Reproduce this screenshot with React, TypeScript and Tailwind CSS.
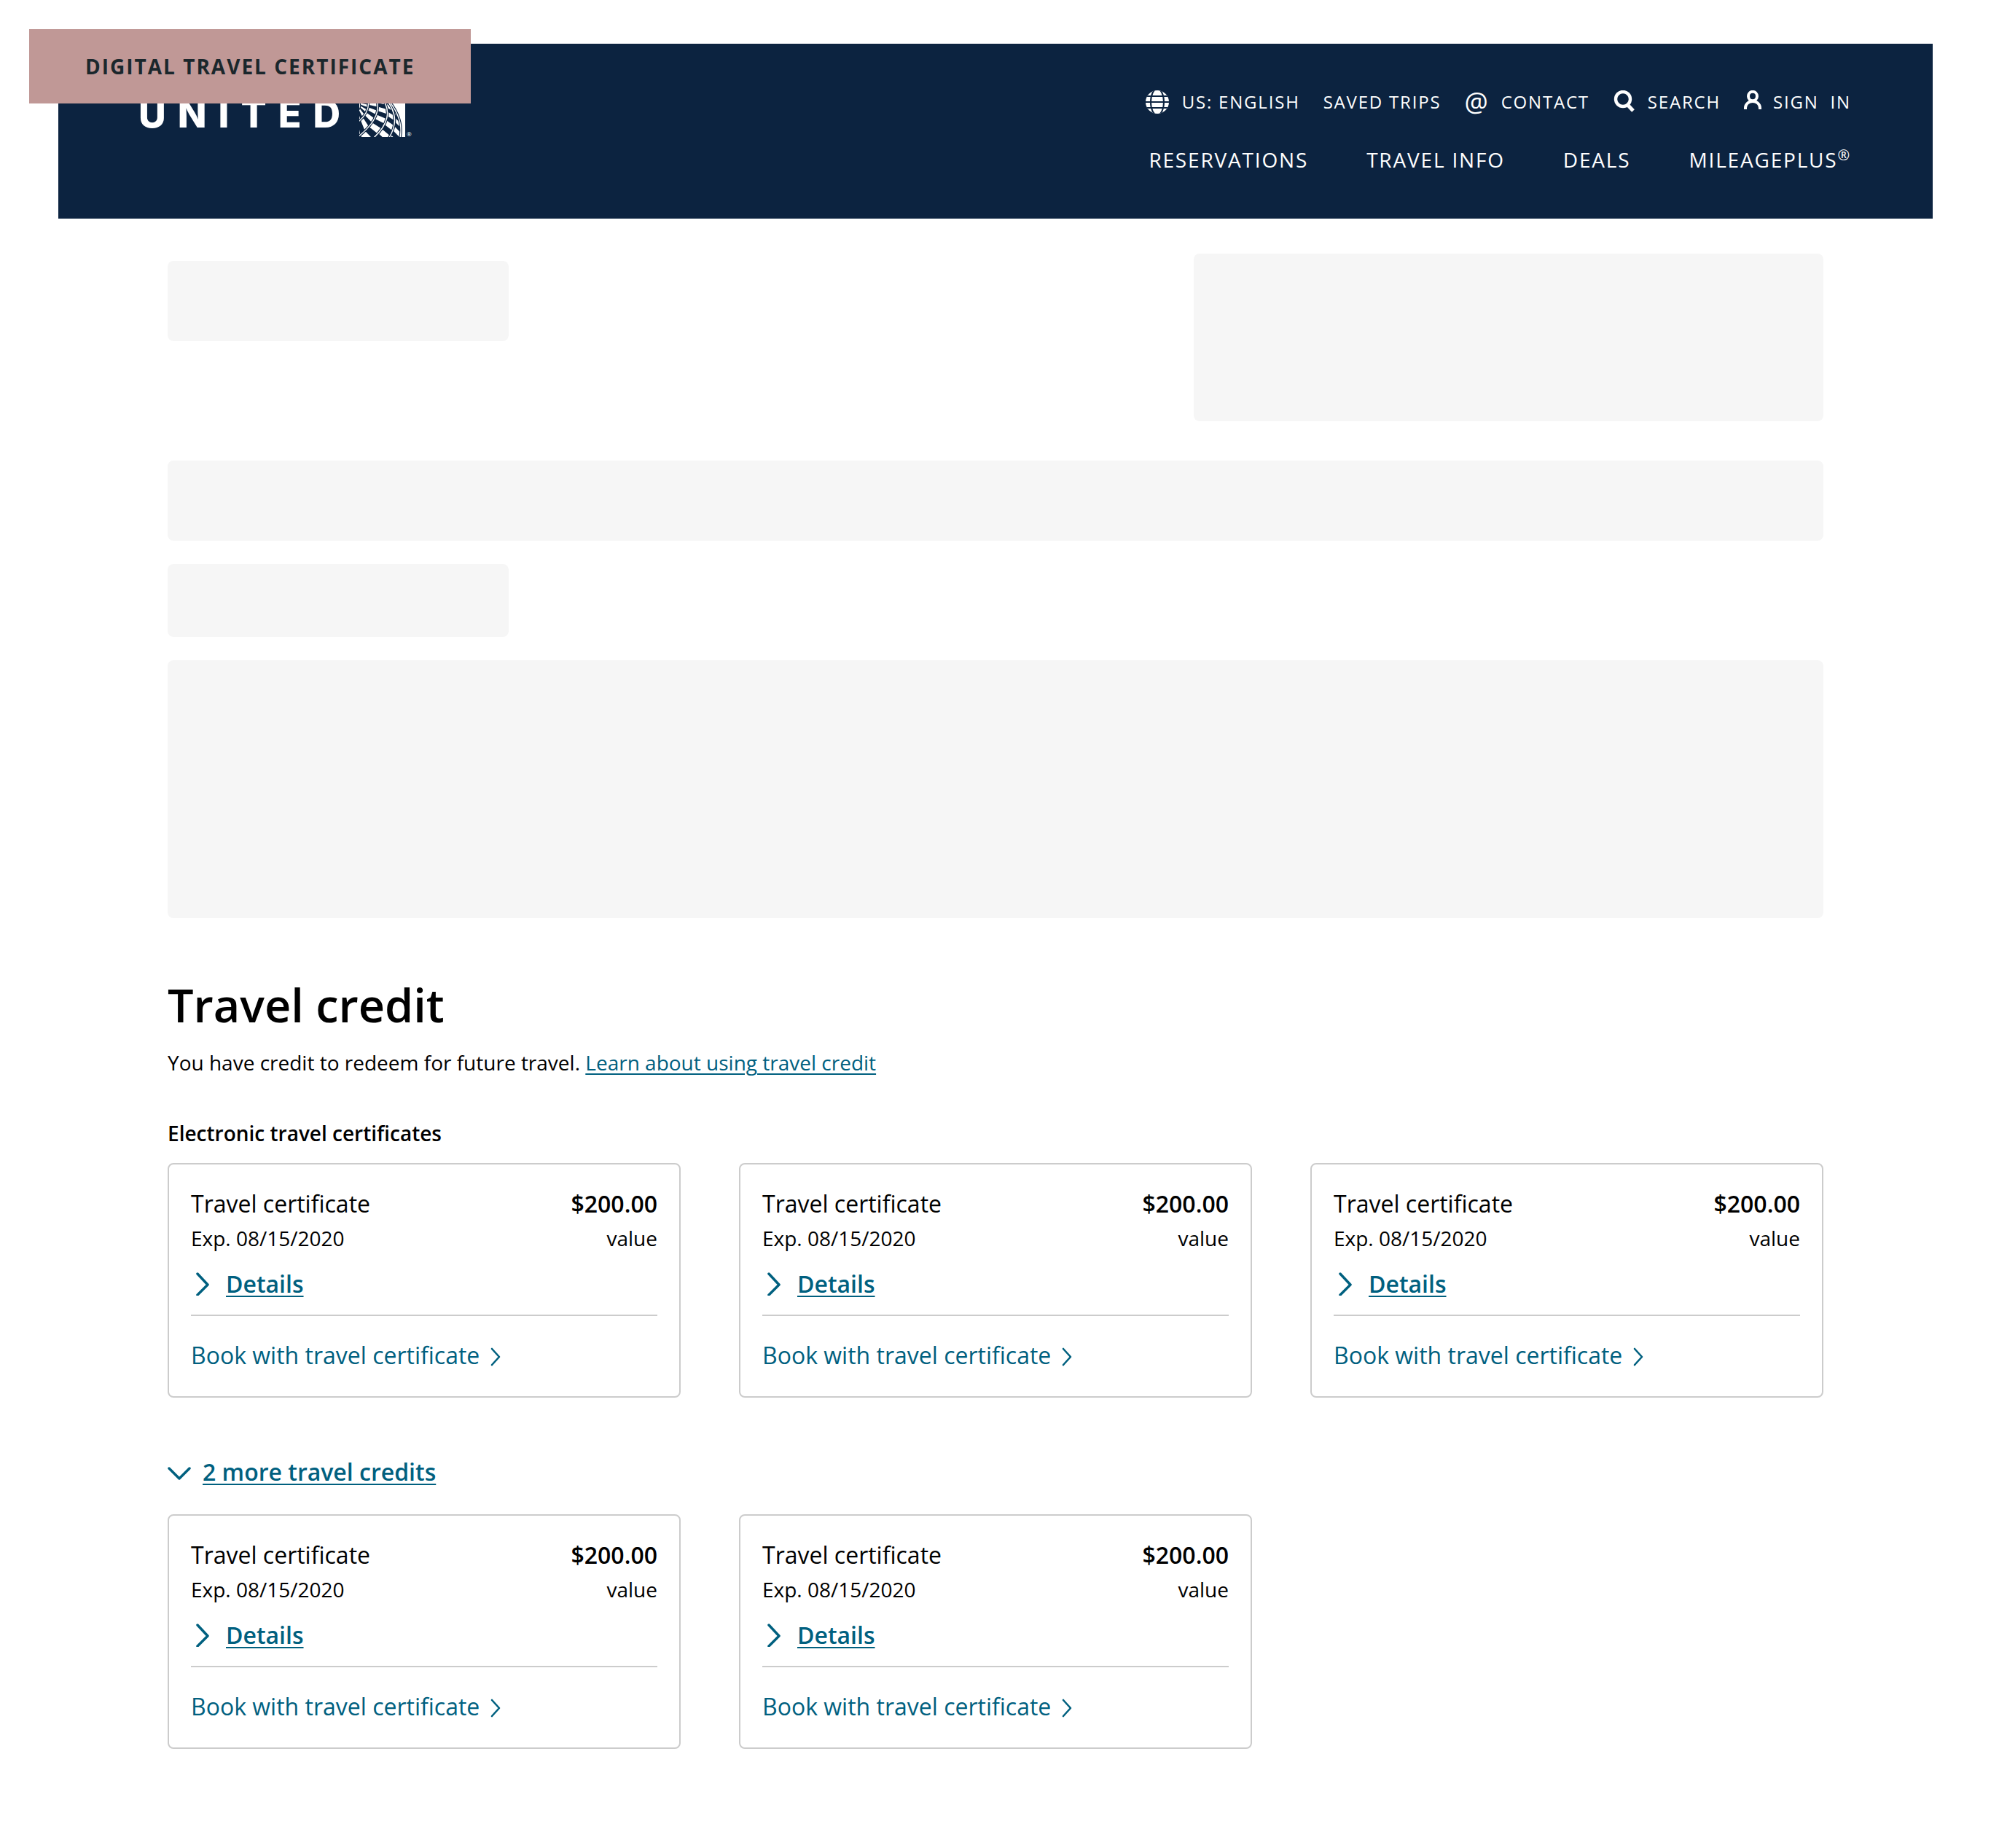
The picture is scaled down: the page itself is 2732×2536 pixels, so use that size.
import React from "react";

function GlobeIcon() {
  return (
    <svg viewBox="0 0 32 32" className="size-8" aria-hidden="true">
      <defs>
        <clipPath id="globe-disc">
          <circle cx="16" cy="16" r="16" />
        </clipPath>
      </defs>
      <circle cx="16" cy="16" r="16" fill="#fff" />
      <g clipPath="url(#globe-disc)" fill="none" stroke="#0c2340" strokeWidth="2">
        <path d="M0 8H32M0 16H32M0 24H32" />
        <ellipse cx="16" cy="16" rx="9" ry="18" />
      </g>
    </svg>
  );
}

function SearchIcon() {
  return (
    <svg viewBox="0 0 32 32" className="size-8" fill="none" stroke="#fff" aria-hidden="true">
      <ellipse cx="14" cy="12" rx="10" ry="10" strokeWidth="4.4" />
      <path d="M20 19.5L28 28" strokeWidth="5" />
    </svg>
  );
}

function PersonIcon() {
  return (
    <svg viewBox="0 0 24 32" className="h-8 w-6" fill="none" stroke="#fff" strokeWidth="4" aria-hidden="true">
      <ellipse cx="12" cy="8" rx="6" ry="6.2" />
      <path d="M2 26v-2a10 9 0 0 1 20 0v2" />
    </svg>
  );
}

type Point = [number, number];
type Curve = [Point, Point, Point];

// Meridians of the sphere, innermost first, as quadratic curves.
const MERIDIANS: Curve[] = [
  [[-4, 12], [6, 20], [-6, 30]],
  [[11, 8], [18, 28], [-6, 46]],
  [[21, 6], [37, 34], [-6, 66]],
  [[28, 6], [55, 36], [13, 70]],
  [[33, 7], [63, 38], [35, 72]],
  [[37, 9], [66, 42], [53, 74]],
];
const CELLS = 11;
// How far the parallels lean down along each column's outer meridian.
const LEAN = [0, 0, 0.14, 0.16, 0.16];

function at([a, b, c]: Curve, t: number): Point {
  const u = 1 - t;
  return [
    u * u * a[0] + 2 * u * t * b[0] + t * t * c[0],
    u * u * a[1] + 2 * u * t * b[1] + t * t * c[1],
  ];
}

function cellPath(column: number, cell: number) {
  const inner = MERIDIANS[column];
  const outer = MERIDIANS[column + 1];
  const lean = 1 + LEAN[column];
  const t0 = cell / CELLS;
  const t1 = (cell + 1) / CELLS;
  const corners = [at(inner, t0), at(outer, t0 * lean), at(outer, t1 * lean), at(inner, t1)];
  return "M" + corners.map((p) => p.map((n) => n.toFixed(2)).join(" ")).join("L") + "Z";
}

const CHECKS = LEAN.map((_, column) =>
  Array.from({ length: CELLS }, (_, cell) => cell)
    .filter((cell) => (cell + column) % 2 === 0)
    .map((cell) => cellPath(column, cell))
    .join(""),
).join("");
const LINES = MERIDIANS.map(([a, b, c]) => `M${a.join(" ")}Q${b.join(" ")} ${c.join(" ")}`).join("");

function UnitedGlobe() {
  return (
    <svg viewBox="0 0 63 63" className="size-[63px]" aria-hidden="true">
      <defs>
        <clipPath id="mark">
          <rect width="63" height="63" />
        </clipPath>
      </defs>
      <rect width="63" height="63" fill="#fff" />
      <g clipPath="url(#mark)">
        <path d={CHECKS} fill="#0c2340" />
        <path d={LINES} fill="none" stroke="#0c2340" strokeWidth="3.6" />
        <path d={LINES} fill="none" stroke="#fff" strokeWidth="1.4" />
      </g>
    </svg>
  );
}

function Chevron({ className, d }: { className: string; d: string }) {
  return (
    <svg viewBox="0 0 32 32" className={className} fill="none" stroke="currentColor" strokeLinecap="round" strokeLinejoin="round" aria-hidden="true">
      <path d={d} />
    </svg>
  );
}

function Placeholder({ className }: { className: string }) {
  return <div className={`rounded-lg bg-[#f6f6f6] ${className}`} />;
}

function CertificateCard() {
  return (
    <article className="rounded-lg border-2 border-[#cccccc] px-[30px] pt-[30px] pb-8">
      <div className="flex justify-between">
        <div>
          <h3 className="text-[32px] leading-[48px]">Travel certificate</h3>
          <p className="text-[28px] leading-[46px]">Exp. 08/15/2020</p>
        </div>
        <div className="text-right">
          <p className="text-[32px] leading-[48px] font-semibold">$200.00</p>
          <p className="text-[28px] leading-[46px]">value</p>
        </div>
      </div>
      <button type="button" className="mt-4 flex items-center gap-4 text-[#00607f]">
        <Chevron className="size-8 stroke-[3.5]" d="M9 2L23 17L9 31" />
        <span className="text-[32px] leading-[48px] font-semibold underline decoration-2 underline-offset-4">Details</span>
      </button>
      <hr className="mt-[18px] border-t-2 border-[#cccccc]" />
      <a href="#book" className="mt-[30px] flex items-center gap-2 text-[32px] leading-[48px] text-[#00607f]">
        Book with travel certificate
        <Chevron className="size-8 stroke-[2.6]" d="M9 7L19 18L9 29" />
      </a>
    </article>
  );
}

export default function App() {
  return (
    <div className="relative min-h-screen bg-white px-20 pt-[60px] pb-[136px] font-['Open_Sans',sans-serif] text-black">
      <div className="absolute top-10 left-10 z-10 bg-[#c09896] px-[77px] py-[31px] text-[28px] leading-10 font-bold tracking-[2px] text-[#1b272c]">
        DIGITAL TRAVEL CERTIFICATE
      </div>

      <header className="flex justify-between bg-[#0c2340] pt-16 pr-28 pb-[61px] pl-[110px] text-white">
        <a href="#home" className="flex h-16 items-end" aria-label="United home">
          <span className="mr-2.5 font-[Inter,sans-serif] text-[52px] leading-[62px] font-extrabold tracking-[16px]">UNITED</span>
          <UnitedGlobe />
          <span className="ml-0.5 text-[8px] leading-2">®</span>
        </a>
        <div className="flex flex-col items-end">
          <nav aria-label="Utility" className="flex h-8 items-center gap-8 text-[24px] leading-8 tracking-[0.075em]">
            <button type="button" className="flex items-center gap-[18px]">
              <GlobeIcon />
              US: ENGLISH
            </button>
            <a href="#trips">SAVED TRIPS</a>
            <a href="#contact" className="flex items-center gap-[18px]">
              <span className="text-[36px] tracking-normal">@</span>
              CONTACT
            </a>
            <a href="#search" className="flex items-center gap-4">
              <SearchIcon />
              SEARCH
            </a>
            <a href="#signin" className="flex items-center gap-4 whitespace-pre">
              <PersonIcon />
              {"SIGN  IN"}
            </a>
          </nav>
          <nav aria-label="Main" className="mt-[43px] flex gap-20 text-[28px] leading-10 tracking-[0.065em]">
            <a href="#reservations">RESERVATIONS</a>
            <a href="#info">TRAVEL INFO</a>
            <a href="#deals">DEALS</a>
            <a href="#mileageplus">
              MILEAGEPLUS<sup className="text-[20px]">®</sup>
            </a>
          </nav>
        </div>
      </header>

      <main className="px-[150px] pt-12">
        <div className="flex items-start justify-between">
          <Placeholder className="mt-2.5 h-[110px] w-[468px]" />
          <Placeholder className="h-[230px] w-[864px]" />
        </div>
        <Placeholder className="mt-[54px] h-[110px]" />
        <Placeholder className="mt-8 h-[100px] w-[468px]" />
        <Placeholder className="mt-8 h-[354px]" />

        <h1 className="mt-[75px] text-[63px] leading-[88px] font-semibold">Travel credit</h1>
        <p className="mt-[15px] text-[28px] leading-10">
          You have credit to redeem for future travel.{" "}
          <a href="#learn" className="text-[#00607f] underline decoration-2 underline-offset-4">
            Learn about using travel credit
          </a>
        </p>

        <h2 className="mt-[57px] text-[28px] leading-10 font-semibold">Electronic travel certificates</h2>
        <section className="mt-[21px] grid grid-cols-3 gap-20">
          <CertificateCard />
          <CertificateCard />
          <CertificateCard />
        </section>

        <button type="button" className="mt-[78px] flex items-center gap-4 text-[#00607f]">
          <Chevron className="size-8 stroke-[3.5]" d="M2 11L16 25L30 11" />
          <span className="text-[32px] leading-[48px] font-semibold underline decoration-2 underline-offset-4">2 more travel credits</span>
        </button>
        <section className="mt-[34px] grid grid-cols-3 gap-20">
          <CertificateCard />
          <CertificateCard />
        </section>
      </main>
    </div>
  );
}
